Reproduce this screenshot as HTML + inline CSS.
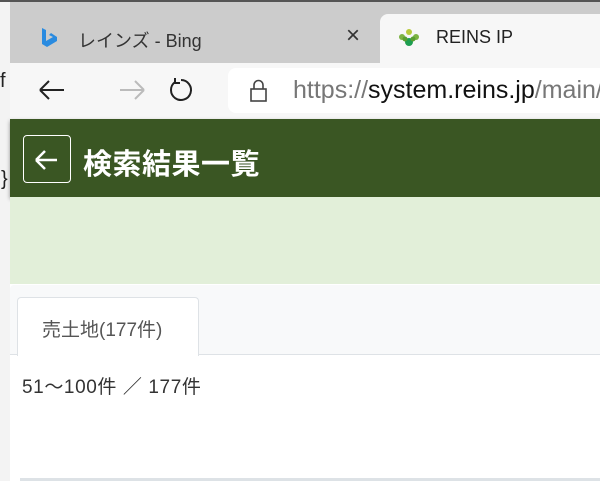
<!DOCTYPE html>
<html><head><meta charset="utf-8"><style>
*{margin:0;padding:0;box-sizing:border-box}
body{width:600px;height:481px;overflow:hidden;position:relative;background:#fff;font-family:"Liberation Sans","Noto Sans CJK JP",sans-serif}
.a{position:absolute;white-space:nowrap}
</style></head><body>
<div class="a" style="left:0;top:0;width:10px;height:481px;background:#f3f3f3"></div>
<div class="a" style="left:0;top:70px;font-size:20px;color:#222">f</div>
<div class="a" style="left:1px;top:168px;font-size:20px;color:#222">}</div>
<div class="a" style="left:0;top:0;width:600px;height:2px;background:#555"></div>
<div class="a" style="left:10px;top:2px;width:590px;height:61px;background:#cccccc"></div>
<div class="a" style="left:380px;top:14px;width:220px;height:49px;background:#f7f7f7;border-radius:8px 0 0 0"></div>
<svg class="a" style="left:38px;top:26px" width="22" height="24" viewBox="0 0 22 24"><path d="M4 2 L8 4 L8 15 L15 11 L11 9 L13 7 L19 11 L19 15 L9 21 L4 18 Z" fill="#2a8be0"/></svg>
<div class="a" style="left:78px;top:27px;font-size:18px;color:#333">レインズ - Bing</div>
<div class="a" style="left:346px;top:22px;font-size:24px;color:#333">×</div>
<svg class="a" style="left:396px;top:28px" width="26" height="20" viewBox="0 0 26 20"><circle cx="13" cy="4" r="3" fill="#b7c93a"/><circle cx="6" cy="9" r="3" fill="#7cb342"/><circle cx="20" cy="9" r="3" fill="#7cb342"/><circle cx="13" cy="14" r="4" fill="#1e9e50"/><circle cx="9" cy="11" r="2.5" fill="#5a9e30"/><circle cx="17" cy="11" r="2.5" fill="#5a9e30"/></svg>
<div class="a" style="left:436px;top:27px;font-size:18px;color:#222">REINS IP</div>
<div class="a" style="left:10px;top:63px;width:590px;height:56px;background:#f7f7f7"></div>
<svg class="a" style="left:36px;top:76px" width="160" height="28" viewBox="0 0 160 28"><path d="M4 14 H28 M4 14 L13 5 M4 14 L13 23" stroke="#222" stroke-width="2" fill="none"/><path d="M84 14 H108 M108 14 L99 5 M108 14 L99 23" stroke="#bbb" stroke-width="2" fill="none"/><path d="M145 4 A10 10 0 1 1 139 6" stroke="#222" stroke-width="2" fill="none"/><path d="M139 2 L139 7 L144 7" stroke="#222" stroke-width="2" fill="none"/></svg>
<div class="a" style="left:228px;top:68px;width:380px;height:45px;background:#fff;border-radius:8px"></div>
<svg class="a" style="left:248px;top:78px" width="22" height="26" viewBox="0 0 22 26"><rect x="3" y="11" width="15" height="12" fill="none" stroke="#444" stroke-width="1.6"/><path d="M6 11 V7 A4.5 4.5 0 0 1 15 7 V11" fill="none" stroke="#444" stroke-width="1.6"/></svg>
<div class="a" style="left:293px;top:76px;font-size:25px;color:#777">https://<span style="color:#111">system.reins.jp</span>/main/l</div>
<div class="a" style="left:10px;top:119px;width:590px;height:78px;background:#3a5623;box-shadow:0 2px 4px rgba(0,0,0,.4)"></div>
<div class="a" style="left:23px;top:135px;width:48px;height:48px;border:1.5px solid #fff;border-radius:4px"></div>
<svg class="a" style="left:33px;top:147px" width="28" height="26" viewBox="0 0 28 26"><path d="M3 13 H24 M3 13 L12 4 M3 13 L12 22" stroke="#fff" stroke-width="2.5" fill="none"/></svg>
<div class="a" style="left:83px;top:141px;font-size:29px;font-weight:bold;color:#fff;letter-spacing:0.5px">検索結果一覧</div>
<div class="a" style="left:10px;top:197px;width:590px;height:87px;background:#e2efd9"></div>
<div class="a" style="left:10px;top:285px;width:590px;height:70px;background:#f8f9fa;border-bottom:1px solid #dee2e6;border-top-left-radius:4px"></div>
<div class="a" style="left:17px;top:297px;width:182px;height:59px;background:#fff;border:1px solid #dee2e6;border-bottom:none;border-radius:4px 4px 0 0"></div>
<div class="a" style="left:42px;top:315px;font-size:19px;color:#555">売土地(177件)</div>
<div class="a" style="left:22px;top:372px;font-size:19px;color:#333;letter-spacing:0.6px">51～100件 ／ 177件</div>
<div class="a" style="left:20px;top:478px;width:580px;height:3px;background:#dde2e6"></div>
</body></html>
